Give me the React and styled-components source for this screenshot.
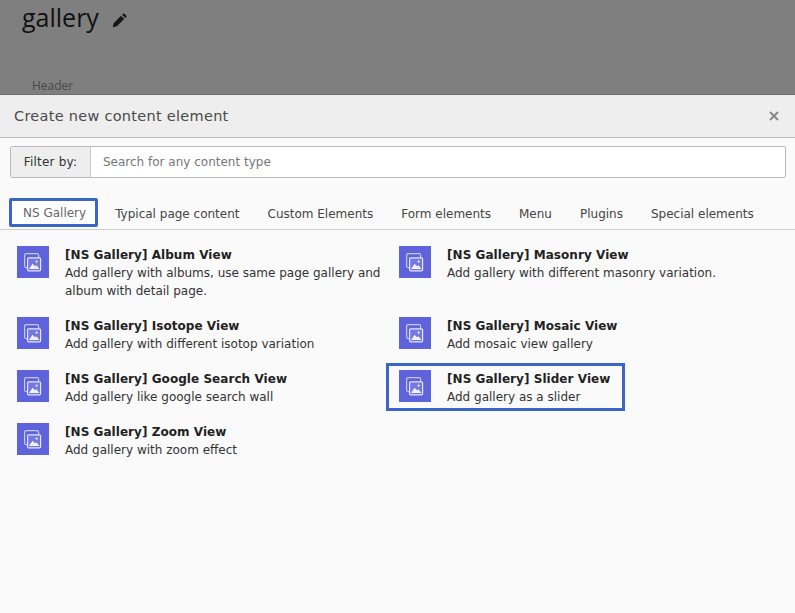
import React from 'react';
import styled, { createGlobalStyle } from 'styled-components';

const GlobalStyle = createGlobalStyle`
  html, body {
    margin: 0;
    padding: 0;
    height: 613px;
    overflow: hidden;
    background: #fafafa;
  }
  * { box-sizing: border-box; }
`;

const Page = styled.div`
  width: 795px;
  height: 613px;
  display: flex;
  flex-direction: column;
  font-family: 'DejaVu Sans', Verdana, sans-serif;
  overflow: hidden;
`;

const Backdrop = styled.div`
  height: 95px;
  flex: none;
  background: #7f7f7f;
  padding: 1px 0 0 22px;
  border-bottom: 1px solid #6e6e6e;
`;

const PageTitle = styled.div`
  display: flex;
  align-items: center;
  gap: 13px;
  height: 32px;
  font-family: 'Open Sans', sans-serif;
  font-size: 25px;
  color: #111;
  svg { margin-top: 6px; }
`;

const BackdropLabel = styled.div`
  margin: 44px 0 0 10px;
  font-family: 'Open Sans', sans-serif;
  font-size: 12px;
  color: #484848;
`;

const Modal = styled.div`
  flex: 1;
  background: #fafafa;
  display: flex;
  flex-direction: column;
`;

const ModalHeader = styled.div`
  height: 43px;
  flex: none;
  display: flex;
  align-items: center;
  justify-content: space-between;
  padding: 0 16px 0 14px;
  background: #eeeeee;
  border-bottom: 1px solid #b9b9b9;
`;

const ModalTitle = styled.div`
  font-size: 14.5px;
  letter-spacing: 0.28px;
  color: #4a4a4a;
`;

const CloseIcon = styled.svg`
  width: 10px;
  height: 10px;
  display: block;
`;

const FilterBar = styled.div`
  display: flex;
  height: 32px;
  margin: 8px 9px 0 10px;
  border: 1px solid #bbbbbb;
  border-radius: 2px;
  background: #fff;
  font-size: 12px;
`;

const FilterLabel = styled.div`
  width: 80px;
  display: flex;
  align-items: center;
  justify-content: center;
  background: #eeeeee;
  border-right: 1px solid #cccccc;
  letter-spacing: 0.2px;
  color: #333;
`;

const FilterText = styled.div`
  display: flex;
  align-items: center;
  padding-left: 12px;
  color: #777;
`;

const TabBar = styled.div`
  display: flex;
  align-items: flex-start;
  height: 31px;
  margin-top: 21px;
  flex: none;
  padding: 0 0 0 9px;
  border-bottom: 1px solid #cdcdcd;
  font-size: 12px;
  color: #444;
`;

const Tab = styled.div`
  height: 29px;
  flex: none;
  display: flex;
  align-items: center;
  padding: 0 14px;
  color: #444;
`;

const ActiveTab = styled(Tab)`
  margin: -1px 3px 0 0;
  padding: 1px 9px 0 11px;
  background: #fff;
  border: 3px solid #3a66c8;
  border-radius: 2px;
  color: #666;
`;

const Elements = styled.div`
  display: grid;
  grid-template-columns: 382px 1fr;
  grid-template-rows: 71px 53px 53px 53px;
  padding: 16px 0 0 17px;
`;

const Element = styled.div`
  position: relative;
  display: flex;
  gap: 16px;
  align-items: flex-start;
  ${p => p.$highlight && `
    &::after {
      content: '';
      box-sizing: border-box;
      position: absolute;
      left: -13px;
      top: -7px;
      width: 239px;
      height: 48px;
      border: 3px solid #3a66c8;
      pointer-events: none;
    }
  `}
`;

const IconTile = styled.svg`
  width: 32px;
  height: 32px;
  flex: none;
  display: block;
`;

const ElementText = styled.div`
  font-size: 12px;
  line-height: 18px;
  color: #333;
  width: ${p => (p.$wide ? '318px' : 'auto')};
`;

const ElementTitle = styled.div`
  font-weight: 700;
  letter-spacing: 0.05px;
  color: #222;
`;

const GalleryIcon = () => (
  <IconTile viewBox="0 0 32 32">
    <rect width="32" height="32" fill="#5e63dc" />
    <rect x="7.6" y="7.6" width="14" height="14" rx="1.5" fill="none" stroke="#c4c6f4" strokeWidth="1.2" />
    <rect x="10.6" y="11.8" width="13" height="13" rx="1" fill="#7478e3" stroke="#e3e4fa" strokeWidth="1.2" />
    <circle cx="19.6" cy="15.6" r="1.1" fill="#eeeffc" />
    <path d="M12 22.9 L15.6 17.8 L18 20.2 L19.4 19.2 L22.4 22.9 Z" fill="#f2f2fd" />
  </IconTile>
);

const elements = [
  { title: '[NS Gallery] Album View', text: 'Add gallery with albums, use same page gallery and album with detail page.', wide: true },
  { title: '[NS Gallery] Masonry View', text: 'Add gallery with different masonry variation.' },
  { title: '[NS Gallery] Isotope View', text: 'Add gallery with different isotop variation' },
  { title: '[NS Gallery] Mosaic View', text: 'Add mosaic view gallery' },
  { title: '[NS Gallery] Google Search View', text: 'Add gallery like google search wall' },
  { title: '[NS Gallery] Slider View', text: 'Add gallery as a slider', highlight: true },
  { title: '[NS Gallery] Zoom View', text: 'Add gallery with zoom effect' },
];

const tabs = ['Typical page content', 'Custom Elements', 'Form elements', 'Menu', 'Plugins', 'Special elements'];

const App = () => (
  <Page>
    <GlobalStyle />
    <Backdrop>
      <PageTitle>
        gallery
        <svg width="15" height="15" viewBox="0 0 16 16">
          <path d="M0.8 15.2 L1.8 10.8 L9.6 3 L13 6.4 L5.2 14.2 Z M10.8 1.8 L11.8 0.8 Q12.6 0.2 13.3 0.8 L15.2 2.7 Q15.8 3.4 15.2 4.2 L14.2 5.2 Z" fill="#161616" />
        </svg>
      </PageTitle>
      <BackdropLabel>Header</BackdropLabel>
    </Backdrop>
    <Modal>
      <ModalHeader>
        <ModalTitle>Create new content element</ModalTitle>
        <CloseIcon viewBox="0 0 10 10">
          <path d="M1 1 L9 9 M9 1 L1 9" stroke="#888" strokeWidth="2" />
        </CloseIcon>
      </ModalHeader>
      <FilterBar>
        <FilterLabel>Filter by:</FilterLabel>
        <FilterText>Search for any content type</FilterText>
      </FilterBar>
      <TabBar>
        <ActiveTab>NS Gallery</ActiveTab>
        {tabs.map(tab => (
          <Tab key={tab}>{tab}</Tab>
        ))}
      </TabBar>
      <Elements>
        {elements.map(el => (
          <Element key={el.title} $highlight={el.highlight}>
            <GalleryIcon />
            <ElementText $wide={el.wide}>
              <ElementTitle>{el.title}</ElementTitle>
              {el.text}
            </ElementText>
          </Element>
        ))}
      </Elements>
    </Modal>
  </Page>
);

export default App;
